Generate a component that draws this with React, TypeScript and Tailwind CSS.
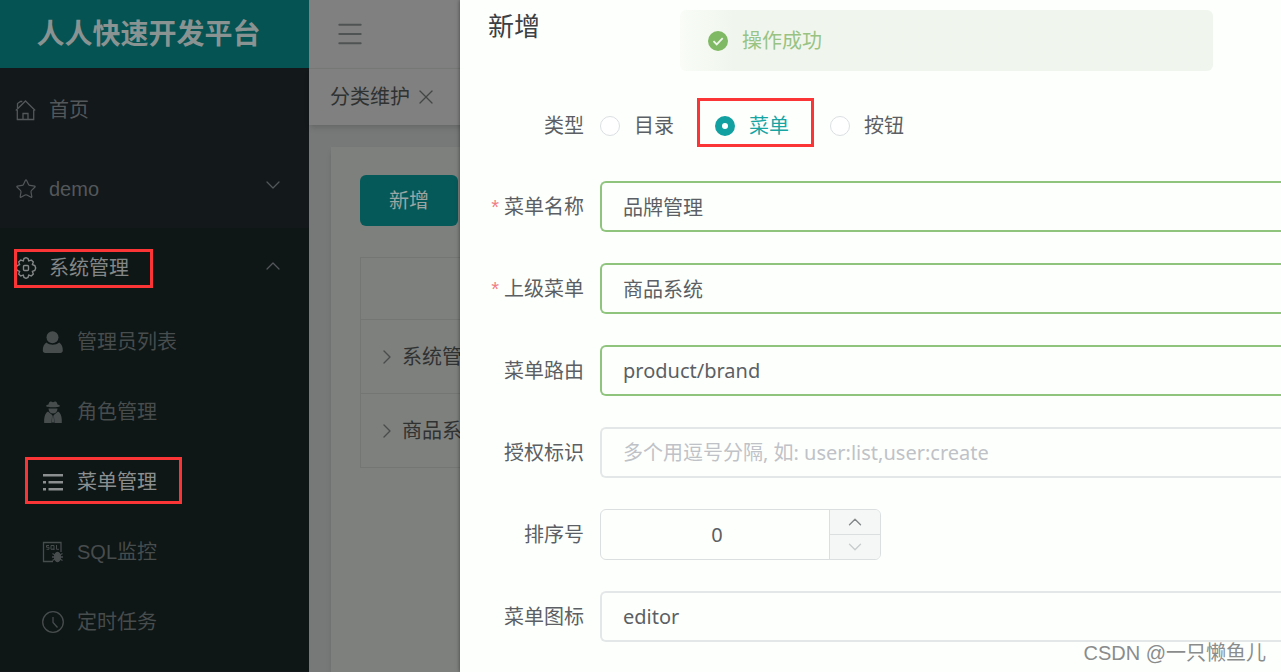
import React from "react";
import { ChevronDown, ChevronRight, ChevronUp, Menu, Star, X } from "lucide-react";

const iconClass = "w-[22px] h-[22px] shrink-0";

const HomeIcon = () => (
  <svg viewBox="0 0 22 22" fill="none" stroke="currentColor" strokeWidth={1.3} className={iconClass}>
    <path d="M.8 11.500L10.500 2l9.700 9.500" />
    <path d="M2.300 11v9.500h16.400V11M2.500 9V4.500L5.500 2.500h1.800" />
    <path d="M8 20.500v-6h5v6" />
  </svg>
);

const GearIcon = () => (
  <svg viewBox="0 0 22 22" fill="none" stroke="currentColor" strokeWidth={1.4} className={iconClass}>
    <path d="M9 1.500l2-.8 2 .8.7 2.400 2.600-.9 2 2-.9 2.600 2.400 1 .9 2.400-.9 2.400-2.400 1 .9 2.600-2 2-2.600-.9-.7 2.400-2 .8-2-.8-.7-2.400-2.600.9-2-2 .9-2.600-2.400-1-.9-2.400.9-2.400 2.400-1-.9-2.600 2-2 2.600.9z" />
    <rect x="8.500" y="8.500" width="5" height="5" rx="1" />
  </svg>
);

const UserIcon = () => (
  <svg viewBox="0 0 22 22" fill="currentColor" className={iconClass}>
    <ellipse cx="10.500" cy="6.300" rx="6" ry="6" />
    <path d="M4.400 11.500C1.800 13 .8 16 .8 19.500c0 1.500 1 2.500 2.400 2.500h15.200c1.400 0 2.400-1 2.400-2.500 0-3.500-1-6.500-3.600-8-1.700 1.500-4.200 2.200-6.400 2.200s-4.700-.7-6.400-2.200z" />
  </svg>
);

const SpyIcon = () => (
  <svg viewBox="0 0 22 22" fill="currentColor" className={iconClass}>
    <path d="M6.500 3.500C7 1 8 .3 9 .6l2 .6 2-.6c1-.3 2 .4 2.500 2.900 1.500.4 2.500 1 2.500 1.500 0 .8-3 1.300-7 1.300S4 5.800 4 5c0-.5 1-1.100 2.500-1.500z" />
    <path d="M6.500 7.500h9c0 3-1.800 5-4.500 5s-4.500-2-4.500-5z" />
    <path d="M6 10.500l4.200 3.500-.7 8H2.200C2 17 2.500 12.500 6 10.500zM16 10.500L11.800 14l.7 8h7.300c.2-5-.3-9.500-3.800-11.500z" />
    <path d="M10.400 14.500h1.200l.7 7H9.700z" />
  </svg>
);

const ListIcon = () => (
  <svg viewBox="0 0 22 22" fill="currentColor" className={iconClass}>
    <path d="M1 3h20v2.500H1zM1 10h3v2.500H1zM6.500 10H21v2.500H6.500zM1 17h3v2.500H1zM6.500 17H21v2.500H6.500z" />
  </svg>
);

const SqlIcon = () => (
  <svg viewBox="0 0 22 22" fill="none" stroke="currentColor" strokeWidth={1.3} className={iconClass}>
    <path d="M11 20.500H1.500v-19H19V11" />
    <path d="M7 4.500H4.500v1.800H7v2H4.500M9 4.500h3v3.800H9zM11 7.500l1.500 1.500M14.500 4v4.300H17" strokeWidth={1} />
    <ellipse cx="15.500" cy="16" rx="3" ry="4.500" fill="currentColor" />
    <path d="M10.500 12.500l2.500 1.500M10 16h3M10.500 19.500l2.500-1.500M20.500 12.500l-2.500 1.500M21 16h-3M20.500 19.500l-2.500-1.500" />
  </svg>
);

const ClockIcon = () => (
  <svg viewBox="0 0 22 22" fill="none" stroke="currentColor" strokeWidth={1.3} className={iconClass}>
    <circle cx="11" cy="11" r="10.300" />
    <path d="M11 6v5.500l4.500 5" />
  </svg>
);

const subMenus = [
  { name: "管理员列表", icon: <UserIcon /> },
  { name: "角色管理", icon: <SpyIcon /> },
  { name: "菜单管理", icon: <ListIcon />, active: true },
  { name: "SQL监控", icon: <SqlIcon /> },
  { name: "定时任务", icon: <ClockIcon /> },
];

const Sidebar: React.FC = () => {
  return (
    <aside className="w-[309px] shrink-0 bg-[#13181b] text-[#53575a]">
      <h1 className="flex h-[68px] items-center justify-center bg-[#055352] pr-3 pt-0.5 text-[28px] font-bold text-[#8a9392]">
        人人快速开发平台
      </h1>
      <nav className="pt-0.5">
        <a href="#home" className="flex h-[79px] items-center gap-3 pl-[15px]">
          <HomeIcon />
          首页
        </a>
        <a href="#demo" className="flex h-[79px] items-center gap-3 pl-[15px] pr-6">
          <Star className={iconClass} strokeWidth={1.3} />
          <span className="flex-1">demo</span>
          <ChevronDown className="mb-2 h-6 w-6" strokeWidth={1.3} />
        </a>
        <div className="bg-[#0e1616]">
          <a href="#sys" className="relative flex h-[79px] items-center gap-3 pl-[15px] pr-6 text-[#838787]">
            <GearIcon />
            <span className="flex-1">系统管理</span>
            <ChevronUp className="mb-1 h-6 w-6 text-[#53575a]" strokeWidth={1.3} />
            <span className="absolute left-[14px] top-[21px] h-[39px] w-[139px] border-3 border-[#fb3535]" />
          </a>
          <ul className="text-[#474c4d]">
            {subMenus.map((item) => (
              <li key={item.name} className="relative">
                <a
                  href="#sub"
                  className={`flex h-[70px] items-center gap-3 pl-[42px] ${item.active ? "text-[#8b8f8f]" : ""}`}
                >
                  {item.icon}
                  <span className="pl-px">{item.name}</span>
                </a>
                {item.active && (
                  <span className="absolute left-[25px] top-[10px] h-[47px] w-[157px] border-3 border-[#fb3535]" />
                )}
              </li>
            ))}
          </ul>
          <div className="h-3.5" />
        </div>
      </nav>
    </aside>
  );
};

const Content: React.FC = () => {
  return (
    <main className="flex min-w-0 flex-1 flex-col bg-[#777978] text-[#303232]">
      <header className="flex h-[68px] items-center bg-[#7f807f] pl-6">
        <button aria-label="toggle menu" className="pl-px text-[#505353]">
          <Menu className="h-8 w-8" strokeWidth={1.5} />
        </button>
      </header>
      <div className="flex h-[57px] items-center gap-1 border-t border-[#767876] bg-[#7f807f] pl-[21px] shadow-md">
        <span>分类维护</span>
        <button aria-label="close tab" className="text-[#444646]">
          <X className="h-6 w-6" strokeWidth={1.3} />
        </button>
      </div>
      <div className="ml-[22px] mt-[22px] flex-1 bg-[#7e807e] pl-[29px] pt-7 shadow-md">
        <button className="h-[51px] w-[98px] rounded-md bg-[#055a59] text-[#9ba5a4]">新增</button>
        <table className="mt-[31px] w-full border-collapse border border-[#747674]">
          <thead>
            <tr className="h-[62px] border-b border-[#747674]">
              <th aria-label="名称" />
            </tr>
          </thead>
          <tbody>
            {["系统管理", "商品系统"].map((name) => (
              <tr key={name} className="h-[74px] border-b border-[#747674]">
                <td className="pl-[14px]">
                  <span className="flex items-center gap-[3px] whitespace-nowrap">
                    <ChevronRight className="h-6 w-6 shrink-0 text-[#4a4c4c]" strokeWidth={1.4} />
                    {name}
                  </span>
                </td>
              </tr>
            ))}
          </tbody>
        </table>
      </div>
    </main>
  );
};

const labelClass = "w-[124px] shrink-0 pr-4 text-right";
const inputClass =
  "h-[51px] min-w-0 flex-1 rounded-l-md border-2 border-r-0 bg-transparent pl-[21px] font-['Noto_Sans','Noto_Sans_CJK_SC',sans-serif] outline-none";

const fields = [
  { id: "name", label: "菜单名称", value: "品牌管理", required: true, valid: true },
  { id: "parent", label: "上级菜单", value: "商品系统", required: true, valid: true },
  { id: "url", label: "菜单路由", value: "product/brand", valid: true },
  { id: "perms", label: "授权标识", value: "", placeholder: "多个用逗号分隔, 如: user:list,user:create" },
];

const types = ["目录", "菜单", "按钮"];

const Dialog: React.FC = () => {
  return (
    <section
      role="dialog"
      aria-label="新增"
      className="absolute inset-y-0 left-[460px] right-0 overflow-hidden bg-[#fdfffd] text-[#5c5f63] shadow-[0_0_4px_rgba(0,0,0,0.5)]"
    >
      <h2 className="pl-7 pt-2 text-[26px] leading-[38px] text-[#3d4043]">新增</h2>

      <form className="flex flex-col gap-[31px] pl-4 pt-[55px]">
        <div className="flex h-[49px] items-center">
          <span className={labelClass}>类型</span>
          {types.map((type) => (
            <label
              key={type}
              className={`relative mr-[41px] flex items-center gap-[14px] ${type === "菜单" ? "text-[#17a5a4]" : ""}`}
            >
              <input
                type="radio"
                name="type"
                defaultChecked={type === "菜单"}
                className="h-5 w-5 appearance-none rounded-full border border-[#dcdfe2] bg-white checked:border-[7px] checked:border-[#12a0a0]"
              />
              {type}
              {type === "菜单" && (
                <span className="absolute -left-[18px] -top-[13px] h-[49px] w-[117px] border-3 border-[#fb3535]" />
              )}
            </label>
          ))}
        </div>

        {fields.map((field) => (
          <div key={field.id} className="flex items-center">
            <label htmlFor={field.id} className={labelClass}>
              {field.required && <span className="mr-[5px] text-[#f08080]">*</span>}
              {field.label}
            </label>
            <input
              id={field.id}
              defaultValue={field.value}
              placeholder={field.placeholder}
              className={`${inputClass} placeholder:text-[#bfc2c7] ${field.valid ? "border-[#8fc47c]" : "border-[#e4e7e7]"}`}
            />
          </div>
        ))}

        <div className="flex items-center">
          <label htmlFor="order" className={labelClass}>
            排序号
          </label>
          <div className="flex h-[51px] w-[281px] overflow-hidden rounded-md border border-[#dcdfe0]">
            <input
              id="order"
              defaultValue="0"
              className="min-w-0 flex-1 bg-transparent pl-1 text-center font-['Noto_Sans',sans-serif] outline-none"
            />
            <div className="flex w-[51px] flex-col border-l border-[#dcdfe0] bg-[#f4f7f5]">
              <button
                type="button"
                aria-label="increase"
                className="flex flex-1 items-center justify-center border-b border-[#dcdfe0] text-[#85898b]"
              >
                <ChevronUp className="h-[22px] w-[22px]" strokeWidth={1.5} />
              </button>
              <button
                type="button"
                aria-label="decrease"
                className="flex flex-1 items-center justify-center text-[#c9cdce]"
              >
                <ChevronDown className="h-[22px] w-[22px]" strokeWidth={1.5} />
              </button>
            </div>
          </div>
        </div>

        <div className="flex items-center">
          <label htmlFor="icon" className={labelClass}>
            菜单图标
          </label>
          <input id="icon" defaultValue="editor" className={`${inputClass} border-[#e4e7e7]`} />
        </div>
      </form>

      <div
        role="status"
        className="absolute left-[220px] right-[68px] top-[10px] flex h-[61px] items-center gap-[14px] rounded-md bg-linear-to-r from-[#f9fcf7] to-[#f0f6ed] to-10% pl-7 text-[#98c383]"
      >
        <svg viewBox="0 0 20 20" className="h-5 w-5">
          <circle cx="10" cy="10" r="10" fill="#7fb963" />
          <path d="M5.500 10.200l3.200 3.200 6-6.200" fill="none" stroke="#f0f6ed" strokeWidth={1.8} />
        </svg>
        操作成功
      </div>
      <p className="absolute bottom-1 right-[15px] text-[#8a8c8c]">CSDN @一只懒鱼儿</p>
    </section>
  );
};

const App: React.FC = () => {
  return (
    <div className="relative flex min-h-screen overflow-hidden font-['Liberation_Sans','Noto_Sans_CJK_SC',sans-serif] text-[20px] leading-[30px]">
      <Sidebar />
      <Content />
      <Dialog />
    </div>
  );
};

export default App;
